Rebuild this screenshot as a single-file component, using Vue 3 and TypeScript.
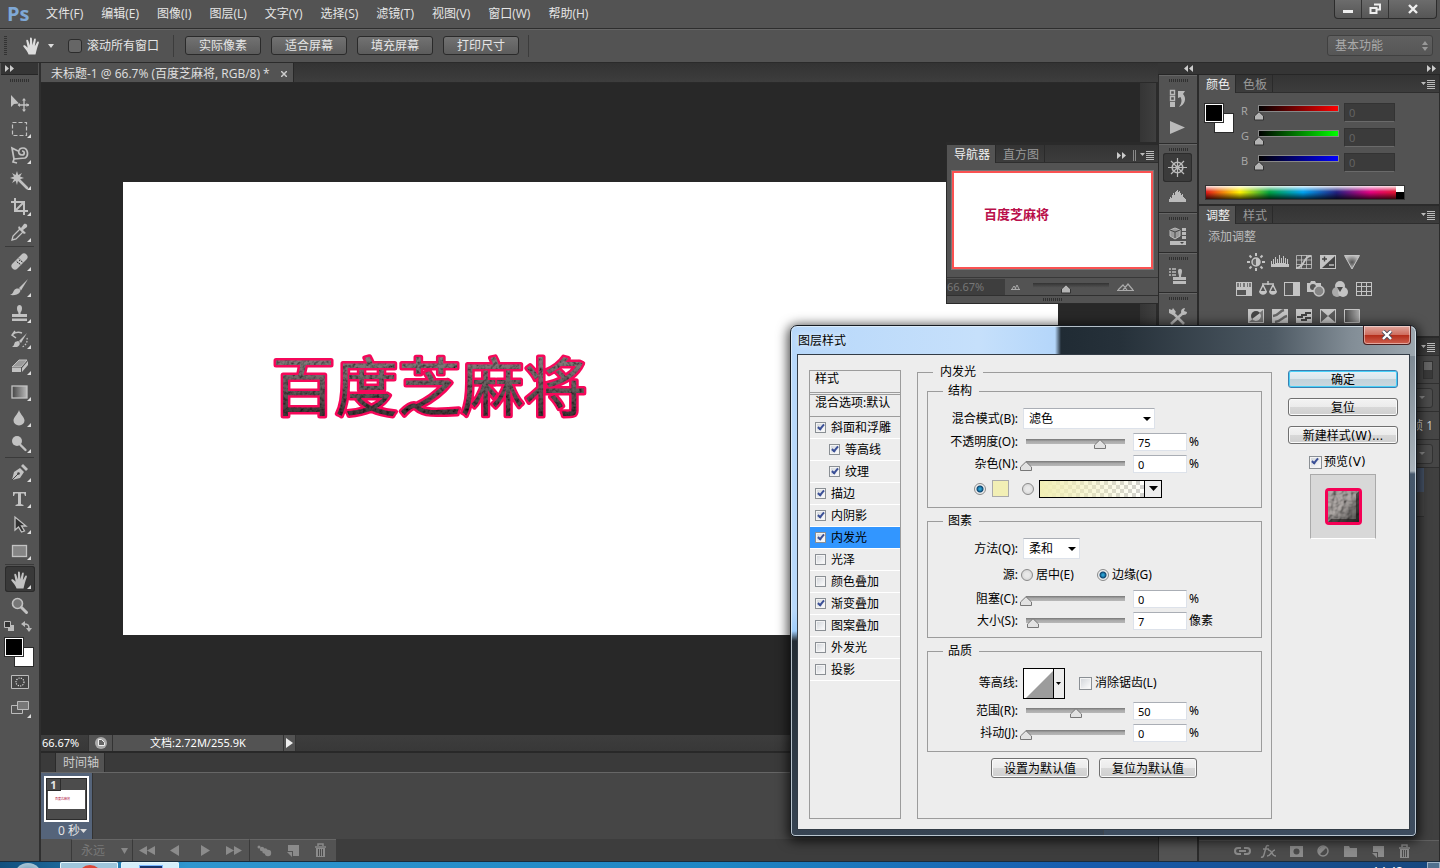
<script setup lang="ts">
import { reactive, ref } from 'vue'

const menus = ['文件(F)', '编辑(E)', '图像(I)', '图层(L)', '文字(Y)', '选择(S)', '滤镜(T)', '视图(V)', '窗口(W)', '帮助(H)']
const viewButtons = ['实际像素', '适合屏幕', '填充屏幕', '打印尺寸']
const handShape = '<path d="M6.6 18.5C5.4 15.6 3.4 13.2 1.4 10.6c-.7-1.1.8-2 1.8-1.1l2.500 2.300L4.300 5c-.2-1.400 1.500-1.700 1.900-.4l1.700 5L8 2.600c0-1.400 1.800-1.400 1.900 0l.5 6.700 1.600-6c.3-1.300 2-1 1.800.4l-1 6.500 2.400-4.100c.7-1.100 2.100-.3 1.600.9-1.600 4-2.200 7.600-3.300 11.500z" fill="currentColor"/>'

interface Tool { name: string; art: string; flyout?: boolean; active?: boolean }

const toolGroups: Tool[][] = [
  [
    { name: '移动工具', art: '<path d="M1 2v12l3-3 5-.5z" fill="currentColor"/><path d="M14 6.500v11M8.500 12h11" stroke="currentColor" stroke-width="1.300"/><path d="M14 5l2 2.500h-4zM14 19l2-2.500h-4zM7.500 12l2.500-2v4zM19 12l-2.500-2v4z" fill="currentColor"/>' },
    { name: '矩形选框工具', flyout: true, art: '<rect x="2.500" y="3.500" width="14" height="13" fill="none" stroke="currentColor" stroke-width="1.200" stroke-dasharray="4 2"/>' },
    { name: '套索工具', flyout: true, art: '<path d="M4 14L2 3l6 3M4 14l11-1c4-2 3-10-2-10-5 0-6 7-1 7 3 0 3-4 0-4M4 14l-1 3 4 1" fill="none" stroke="currentColor" stroke-width="1.700"/>' },
    { name: '魔棒工具', flyout: true, art: '<path d="M9 9l8 8" stroke="currentColor" stroke-width="2.600" stroke-linecap="round"/><path d="M7 0l1.200 4L12 2l-2 3.500 4 1.500-4 1.200L12 12 8 9.800 7 14 5.600 9.800 2 12l2-3.800L0 7l4-1.500L2 2l3.600 2z" fill="currentColor"/>' },
    { name: '裁剪工具', flyout: true, art: '<path d="M5 1v13h13M1 5h13v13M6 13l8-8" fill="none" stroke="currentColor" stroke-width="2"/>' },
    { name: '吸管工具', flyout: true, art: '<path d="M2 17l1-4 7-7 3 3-7 7z" fill="none" stroke="currentColor" stroke-width="1.300"/><path d="M9 3l7 7-2 1-6-6zM11 5l3-4c2-1 4 1 3 3l-4 3z" fill="currentColor"/>' },
  ],
  [
    { name: '修补工具', flyout: true, art: '<path d="M5 14l9-9" stroke="currentColor" stroke-width="7" stroke-linecap="round"/><path d="M6 8.500l5 5M8.500 6l5 5" stroke="#666" stroke-width=".8"/><path d="M9 8h1v1H9zM11 9h1v1h-1zM9 11h1v1H9zM7 10h1v1H7z" fill="#444"/>' },
    { name: '画笔工具', flyout: true, art: '<path d="M18 1L9 10l2 2.500z" fill="currentColor"/><path d="M8 10.500c2 0 3 2 2 3.500-2 3-6 3.500-10 3 3-1 3-3 4-4.500s2-2 4-2z" fill="currentColor"/>' },
    { name: '仿制图章工具', flyout: true, art: '<path d="M7 4c0-4 5-4 5 0s-1.500 3-1.500 6H17v3H2v-3h6.500C8.500 7 7 8 7 4zM2 14.500h15V17H2z" fill="currentColor"/>' },
    { name: '历史记录画笔工具', flyout: true, art: '<path d="M17 3l-8 8 2 2zM8 11c3 1 2 5-1 6H2c2-1 2-3 3-5z" fill="currentColor"/><path d="M2 5c3-3 7-3 10-2M5 1L2 5l4 3" fill="none" stroke="currentColor" stroke-width="1.500"/><path d="M17 8c1 4-2 8-5 9" fill="none" stroke="currentColor" stroke-width="1.300" stroke-dasharray="1.500 1.500"/>' },
    { name: '橡皮擦工具', flyout: true, art: '<path d="M2 11L9 4h8l-6 7z" fill="#9a9a9a" stroke="currentColor"/><path d="M2 12h9v4H2zM12 12l6-7v4l-6 7z" fill="currentColor"/>' },
    { name: '渐变工具', flyout: true, art: '<defs><linearGradient id="tg"><stop stop-color="#444"/><stop offset="1" stop-color="#bbb"/></linearGradient></defs><rect x="2" y="4" width="15" height="12" fill="url(#tg)" stroke="currentColor" stroke-width="1.300"/>' },
    { name: '模糊工具', flyout: true, art: '<path d="M9 2c1 4 5.500 7 5.500 10.500a5.500 5 0 0 1-11 0C3.500 9 8 6 9 2z" fill="currentColor"/>' },
    { name: '减淡工具', flyout: true, art: '<circle cx="7" cy="7" r="5" fill="currentColor"/><path d="M10.500 11l5 5" stroke="currentColor" stroke-width="2.400" stroke-linecap="round"/>' },
  ],
  [
    { name: '钢笔工具', flyout: true, art: '<path d="M2 17L4 9l6-4 4 4-4 6z" fill="currentColor"/><path d="M2 17l6-6" stroke="#444"/><circle cx="8.500" cy="10.500" r="1.300" fill="#444"/><path d="M11 3l2-2 5 5-2 2z" fill="currentColor"/>' },
    { name: '横排文字工具', flyout: true, art: '<path d="M3 3h13v4h-1l-1-2.500h-3V15l2.500 1v1h-8v-1L8 15V4.500H5L4 7H3z" fill="currentColor"/>' },
    { name: '路径选择工具', flyout: true, art: '<path d="M5 2v13l3.500-3 3 5 3-1-3-5h4.500z" fill="#303030" stroke="currentColor" stroke-width="1.300"/>' },
    { name: '矩形工具', flyout: true, art: '<rect x="2.500" y="4.500" width="14" height="11" fill="#858585" stroke="currentColor" stroke-width="1.300"/>' },
  ],
  [
    { name: '抓手工具', flyout: true, active: true, art: handShape },
    { name: '缩放工具', art: '<circle cx="7.500" cy="7.500" r="5" fill="#777" stroke="currentColor" stroke-width="1.600"/><path d="M11.500 11.500l5 5" stroke="currentColor" stroke-width="3" stroke-linecap="round"/>' },
  ],
]

const dockGroups: Tool[][] = [
  [
    { name: '历史记录', art: '<path d="M2.500 1.500h4v4h-4zM2.500 7.500h4v4h-4z" fill="none" stroke="currentColor" stroke-width="1.400"/><path d="M2 13h5v5H2z" fill="currentColor"/><path d="M10 2h7l-2 3c4 4 2 11-4 13 3-4 3-7 1.500-10L10 9z" fill="currentColor"/>' },
    { name: '动作', art: '<path d="M2 3v13l15-6.500z" fill="currentColor"/>' },
  ],
  [
    { name: '导航器', active: true, art: '<circle cx="9.500" cy="9.500" r="5.300" fill="none" stroke="currentColor" stroke-width="1.600"/><circle cx="9.500" cy="9.500" r="2" fill="currentColor"/><path d="M9.500 0v19M0 9.500h19M3 3l13 13M16 3L3 16" stroke="currentColor" stroke-width="1.200"/>' },
    { name: '直方图', art: '<path d="M1 15v-3h1v-2h1v1h1V8h1V6h1v2h1V5h1V4h1V3h1v2h1V4h1v2h1v2h1V7h1v3h1v1h1v1h1v3z" fill="currentColor"/>' },
  ],
  [{ name: '3D', art: '<path d="M2 3l5-2 5 2v6l-5 3-5-3z" fill="#9a9a9a" stroke="currentColor"/><path d="M2 3l5 2 5-2M7 5v6" fill="none" stroke="#444"/><path d="M14 1h4v3h-4zM14 5h4v3h-4zM14 9h4v3h-4zM2 14h16v4H2z" fill="currentColor"/><path d="M12 15h4l-2 2z" fill="#444"/>' }],
  [{ name: '仿制源', art: '<path d="M1 2h2M4 2h4M1 5h2M4 5h4M1 8h2M4 8h4" stroke="currentColor" stroke-width="1.500"/><path d="M10 4c0-3 4-3 4 0s-1 3-1 6h5v3H5v-3h6c0-3-1-3-1-6zM5 14h13v3H5z" fill="currentColor"/>' }],
  [{ name: '工具预设', art: '<path d="M3 17L15 6M4 5l12 12" stroke="currentColor" stroke-width="2.600"/><path d="M1 2l3 1 1-2 3 4-3 3-4-2z" fill="currentColor"/><path d="M13 5c0-3 2-4 4-4l-1 3 3 1c0 3-3 3-5 3z" fill="currentColor"/>' }],
]

const adjustmentRows: string[][] = [
  [
    '<circle cx="9" cy="9" r="4" fill="#666" stroke="currentColor" stroke-width="1.500"/><path d="M9 5a4 4 0 0 1 0 8zM8 0h2v3H8zM8 15h2v3H8zM0 8h3v2H0zM15 8h3v2h-3z" fill="currentColor"/><path d="M2.500 2.500l2 2M13.500 13.500l2 2M15.500 2.500l-2 2M4.500 13.500l-2 2" stroke="currentColor" stroke-width="2"/>',
    '<path d="M0 14V8h1v3h1V6h1v5h1V4h1v6h1V6h1v4h1V2h1v8h1V5h1v5h1V3h1v7h1V5h1v6h1V6h1v5h1v3z" fill="currentColor"/>',
    '<path d="M1.500 2.500h15v13h-15zM6.500 2v14M11.500 2v14M1 7h16M1 11.500h16" fill="none" stroke="currentColor" stroke-width=".8"/><path d="M1 15c9 0 7-12 15-12" fill="none" stroke="currentColor" stroke-width="1.800"/>',
    '<path d="M1 2h16v14H1z" fill="currentColor"/><path d="M3 15L16 3v12z" fill="#444"/><path d="M3 6h5M5.500 3.500v5" stroke="#444" stroke-width="1.400"/><path d="M10 12h5" stroke="currentColor" stroke-width="1.400"/>',
    '<defs><radialGradient id="vg"><stop stop-color="#555"/><stop offset="1" stop-color="#bbb"/></radialGradient></defs><path d="M1.500 2.500h15L9 16z" fill="url(#vg)" stroke="currentColor"/>',
  ],
  [
    '<path d="M1 2h16v14H1z" fill="currentColor"/><path d="M2 3h2v4H2zM5 3h1v4H5zM8 3h2v4H8zM12 3h1v4h-1zM14 3h2v4h-2z" fill="#777"/><path d="M2 10h9v5H2z" fill="#555"/>',
    '<path d="M9 1v4M3 4h12M4 5l-3 6M4 5l3 6M14 5l-3 6M14 5l3 6" fill="none" stroke="currentColor" stroke-width="1.500"/><path d="M0 11h8c0 5-8 5-8 0zM10 11h8c0 5-8 5-8 0z" fill="currentColor"/>',
    '<path d="M1 2h16v14H1z" fill="currentColor"/><path d="M2 3h8v12H2z" fill="#555"/>',
    '<path d="M0 3h3l1-2h4l1 2h5v9H0z" fill="currentColor"/><circle cx="6" cy="7" r="3" fill="#555"/><circle cx="12" cy="11" r="5" fill="#858585" stroke="currentColor" stroke-width="1.500"/>',
    '<circle cx="9" cy="6" r="5" fill="currentColor"/><circle cx="6" cy="12" r="5" fill="#aaa"/><circle cx="12" cy="12" r="5" fill="currentColor"/><path d="M6 7l6 0-3 5z" fill="#484848"/>',
    '<path d="M1 2h16v14H1z" fill="currentColor"/><path d="M2 3h4v3H2zM7 3h4v3H7zM12 3h4v3h-4zM2 7h4v4H2zM7 7h4v4H7zM12 7h4v4h-4zM2 12h4v3H2zM7 12h4v3H7zM12 12h4v3h-4z" fill="#535353"/>',
  ],
  [
    '<path d="M1 2h16v14H1z" fill="currentColor"/><path d="M2 15L16 3v12z" fill="#777"/><circle cx="9" cy="9" r="5" fill="#454545"/><path d="M5 12a5 5 0 0 0 8-6z" fill="currentColor"/>',
    '<path d="M1 2h16v14H1z" fill="currentColor"/><path d="M2 9c7-1 6-5 11-6M4 15c7-1 7-5 12-6" fill="none" stroke="#666" stroke-width="2.500"/>',
    '<path d="M1 2h16v14H1z" fill="currentColor"/><path d="M2 9h4V7h4V5h6v2h-4v2H8v2H2zM6 14v-2h4v-2h6v2h-4v2z" fill="#444"/>',
    '<path d="M1 2h16v14H1z" fill="currentColor"/><path d="M2 3v12l7-6zM16 3v12l-7-6z" fill="#5a5a5a"/>',
    '<defs><linearGradient id="ag"><stop stop-color="#484848"/><stop offset="1" stop-color="#aaa"/></linearGradient></defs><path d="M1.500 2.500h15v13h-15z" fill="url(#ag)" stroke="currentColor"/>',
  ],
]

const layerActions: Tool[] = [
  { name: '链接图层', art: '<path d="M8 6H5a3 3 0 0 0 0 6h3M11 6h3a3 3 0 0 1 0 6h-3M6 9h7" fill="none" stroke="currentColor" stroke-width="2"/>' },
  { name: '图层样式', art: '<path d="M9 4c-3-2-3 2-4 5s-1 7-4 6M3 7h6M8 8c4-1 3 6 8 6M15 8c-3 0-4 6-8 6" fill="none" stroke="currentColor" stroke-width="1.500"/>' },
  { name: '添加蒙版', art: '<path d="M3 4h13v11H3z" fill="currentColor"/><circle cx="9.500" cy="9.500" r="3" fill="#4b4b4b"/>' },
  { name: '新建调整图层', art: '<circle cx="9" cy="9" r="5" fill="none" stroke="currentColor" stroke-width="1.500"/><path d="M5.500 12.500a5 5 0 0 1 7-7z" fill="currentColor"/>' },
  { name: '新建组', art: '<path d="M3 4h5l1 2h7v9H3z" fill="currentColor"/>' },
  { name: '新建图层', art: '<path d="M5 4h11v11h-6v-5H5z" fill="currentColor"/><path d="M4 11h5v5z" fill="currentColor"/>' },
  { name: '删除图层', art: '<path d="M4 6h11M7 5V3h5v2" fill="none" stroke="currentColor" stroke-width="1.500"/><path d="M5 7h9v9H5z" fill="currentColor"/><path d="M7.500 8v7M9.500 8v7M11.500 8v7" stroke="#4b4b4b"/>' },
]
const playback: Tool[] = [
  { name: '第一帧', art: '<path d="M9 5v9l-8-4.500zM17 5v9l-8-4.500z" fill="currentColor"/>' },
  { name: '上一帧', art: '<path d="M12 4v11L3 9.500z" fill="currentColor"/>' },
  { name: '播放', art: '<path d="M5 4v11l9-5.500z" fill="currentColor"/>' },
  { name: '下一帧', art: '<path d="M1 5v9l8-4.500zM9 5v9l8-4.500z" fill="currentColor"/>' },
]
const frameActions: Tool[] = [
  { name: '过渡动画帧', art: '<circle cx="4" cy="6" r="1.500" fill="currentColor"/><circle cx="7" cy="8" r="2.200" fill="currentColor"/><circle cx="10" cy="10" r="2.700" fill="currentColor"/><circle cx="13" cy="12" r="3.200" fill="currentColor"/>' },
  layerActions[5],
  layerActions[6],
]

const channels = reactive([
  { name: 'R', css: 'red', value: 0 },
  { name: 'G', css: 'green', value: 0 },
  { name: 'B', css: 'blue', value: 0 },
])

const effects = reactive([
  { name: '斜面和浮雕', on: true, sub: false },
  { name: '等高线', on: true, sub: true },
  { name: '纹理', on: true, sub: true },
  { name: '描边', on: true, sub: false },
  { name: '内阴影', on: true, sub: false },
  { name: '内发光', on: true, sub: false },
  { name: '光泽', on: false, sub: false },
  { name: '颜色叠加', on: false, sub: false },
  { name: '渐变叠加', on: true, sub: false },
  { name: '图案叠加', on: false, sub: false },
  { name: '外发光', on: false, sub: false },
  { name: '投影', on: false, sub: false },
])
const selected = ref('内发光')

interface Amount { id: string; label: string; value: number; unit: string }
const structure = reactive<Amount[]>([
  { id: 'opacity', label: '不透明度(O):', value: 75, unit: '%' },
  { id: 'noise', label: '杂色(N):', value: 0, unit: '%' },
])
const elements = reactive<Amount[]>([
  { id: 'choke', label: '阻塞(C):', value: 0, unit: '%' },
  { id: 'size', label: '大小(S):', value: 7, unit: '像素' },
])
const quality = reactive<Amount[]>([
  { id: 'range', label: '范围(R):', value: 50, unit: '%' },
  { id: 'jitter', label: '抖动(J):', value: 0, unit: '%' },
])
const fill = ref('color')
const source = ref('edge')
const preview = ref(true)
const antialias = ref(false)
const scrollAll = ref(false)
const zoom = ref(44)
</script>

<template>
  <div class="app">
    <header class="menubar">
      <span class="logo">Ps</span>
      <nav class="menus"><button v-for="m in menus" :key="m" type="button">{{ m }}</button></nav>
      <div class="winbtns">
        <button type="button" aria-label="最小化"><svg width="12" height="12"><path d="M1 7h10v3H1z" fill="#eee" /></svg></button>
        <button type="button" aria-label="还原"><svg width="12" height="12"><path d="M5 1.500h6v5H8M1.500 5h6v5h-6z" fill="none" stroke="#eee" stroke-width="2" /></svg></button>
        <button type="button" class="wide" aria-label="关闭"><svg width="12" height="12"><path d="M2 2l8 8M10 2l-8 8" stroke="#eee" stroke-width="2.400" /></svg></button>
      </div>
    </header>

    <div class="options">
      <i class="vgrip"></i>
      <svg class="hand" width="18" height="19" viewBox="0 0 18 19" v-html="handShape"></svg>
      <svg class="drop" width="6" height="4"><path d="M0 0h6L3 4z" fill="#ddd" /></svg>
      <label class="scroll-all"><input v-model="scrollAll" type="checkbox">滚动所有窗口</label>
      <div class="viewbtns"><button v-for="b in viewButtons" :key="b" type="button">{{ b }}</button></div>
      <div class="workspace-pick">
        <select aria-label="工作区"><option>基本功能</option></select>
        <svg width="6" height="10"><path d="M0 4h6L3 0zM0 6h6l-3 4z" fill="#999" /></svg>
      </div>
    </div>

    <div class="work">
      <aside class="tools">
        <div class="dockhead"><svg width="9" height="7"><path d="M0 0v7l4-3.500zM5 0v7l4-3.500z" fill="#ccc" /></svg></div>
        <i class="hgrip"></i>
        <div v-for="(g, gi) in toolGroups" :key="gi" class="toolgroup">
          <button v-for="t in g" :key="t.name" type="button" :aria-label="t.name" :class="{ active: t.active, flyout: t.flyout }">
            <svg width="19" height="19" viewBox="0 0 19 19" v-html="t.art"></svg>
          </button>
        </div>
        <div class="mini">
          <svg width="10" height="10"><path d="M4 4h6v6H4z" fill="#bbb" /><path d="M.5.500h6v6h-6z" fill="#333" stroke="#bbb" /></svg>
          <svg width="11" height="11"><path d="M3 3c4 0 5 1 5 5" fill="none" stroke="#bbb" stroke-width="1.500" /><path d="M0 3l4-3v6zM5 7h6l-3 4z" fill="#bbb" /></svg>
        </div>
        <div class="swatches"><i class="bg"></i><i class="fg"></i></div>
        <button class="modebtn" type="button" aria-label="快速蒙版"><svg width="18" height="14"><path d="M.5.500h17v13H.5z" fill="#444" stroke="#bbb" /><circle cx="9" cy="7" r="4" fill="none" stroke="#ddd" stroke-width="1.200" stroke-dasharray="1.200 1.200" /></svg></button>
        <button class="modebtn flyout" type="button" aria-label="屏幕模式"><svg width="18" height="14"><path d="M.5 4.500h11v8H.5z" fill="#555" stroke="#bbb" /><path d="M6.500.500h11v8h-11z" fill="#777" stroke="#bbb" /></svg></button>
      </aside>

      <main class="center">
        <div class="tabbar">
          <div class="doctab"><span>未标题-1 @ 66.7% (百度芝麻将, RGB/8) *</span><button type="button" aria-label="关闭文档"><svg width="6" height="6"><path d="M0 0l6 6M6 0L0 6" stroke="#ccc" stroke-width="1.500" /></svg></button></div>
        </div>
        <div class="docarea">
          <div class="stage">
            <svg class="canvas" viewBox="0 0 935 453">
              <defs>
                <linearGradient id="metal" x1="0" y1="0" x2="0" y2="1"><stop offset=".1" stop-color="#918a8a" /><stop offset=".6" stop-color="#5f5958" /><stop offset="1" stop-color="#2a2323" /></linearGradient>
                <filter id="rock" x="-5%" y="-10%" width="110%" height="120%">
                  <feTurbulence type="fractalNoise" baseFrequency=".3" numOctaves="2" result="n" />
                  <feColorMatrix in="n" values="0 0 0 0 0  0 0 0 0 0  0 0 0 0 0  2 0 0 0 -.8" result="d" />
                  <feComposite in="d" in2="SourceAlpha" operator="in" result="t" />
                  <feMerge><feMergeNode in="SourceGraphic" /><feMergeNode in="t" /></feMerge>
                </filter>
              </defs>
              <text class="art outline" x="149" y="228">百度芝麻将</text>
              <text class="art" x="149" y="228" fill="url(#metal)" filter="url(#rock)">百度芝麻将</text>
            </svg>
          </div>
          <div class="scrollbar"></div>
        </div>
        <div class="status">
          <span class="pct">66.67%</span>
          <span class="sicon"><svg width="12" height="12"><circle cx="6" cy="6" r="6" fill="#aaa" /><path d="M3.500 2.500h3l3 3v3h-6z" fill="#666" stroke="#eee" /></svg></span>
          <span class="docsize">文档:2.72M/255.9K</span>
          <button type="button" aria-label="状态选项"><svg width="7" height="10"><path d="M0 0v10l7-5z" fill="#eee" /></svg></button>
        </div>
        <section class="timeline">
          <div class="ttabs"><span>时间轴</span></div>
          <div class="frames">
            <div class="frame">
              <div class="fthumb"><b>1</b><div class="fpaper"><span>百度芝麻将</span></div></div>
              <div class="delay">0 秒<svg width="7" height="4"><path d="M0 0h7L3.500 4z" fill="#ddd" /></svg></div>
            </div>
          </div>
          <div class="tcontrols">
            <div class="loop">永远<svg width="7" height="6"><path d="M0 0h7L3.500 6z" fill="#888" /></svg></div>
            <div class="cgroup play"><button v-for="p in playback" :key="p.name" type="button" :aria-label="p.name"><svg width="19" height="19" viewBox="0 0 19 19" v-html="p.art"></svg></button></div>
            <div class="cgroup"><button v-for="p in frameActions" :key="p.name" type="button" :aria-label="p.name"><svg width="19" height="19" viewBox="0 0 19 19" v-html="p.art"></svg></button></div>
          </div>
        </section>
      </main>

      <div class="right">
        <div class="dockhead wide"><svg width="9" height="7"><path d="M4 0v7L0 3.500zM9 0v7L5 3.500z" fill="#ccc" /></svg><svg width="9" height="7"><path d="M0 0v7l4-3.500zM5 0v7l4-3.500z" fill="#ccc" /></svg></div>
        <div class="rightcols">
          <div class="dock">
            <div v-for="(g, gi) in dockGroups" :key="gi" class="dockgroup">
              <i class="hgrip"></i>
              <button v-for="t in g" :key="t.name" type="button" :aria-label="t.name" :class="{ active: t.active }"><svg width="19" height="19" viewBox="0 0 19 19" v-html="t.art"></svg></button>
            </div>
          </div>
          <div class="panels">
            <section class="panel color">
              <div class="ptabs"><span class="on">颜色</span><span>色板</span><svg class="pmenu" width="14" height="9"><path d="M0 2h5L2.500 5zM6 0h8v1H6zM6 2h8v1H6zM6 4h8v1H6zM6 6h8v1H6zM6 8h8v1H6z" fill="#bbb" /></svg></div>
              <div class="cbody">
                <div class="swatches"><i class="bg"></i><i class="fg"></i></div>
                <div class="channels">
                  <div v-for="c in channels" :key="c.name" class="channel">
                    <label :for="'c' + c.name">{{ c.name }}</label>
                    <input :id="'c' + c.name" v-model.number="c.value" type="range" max="255" :class="c.css">
                    <input v-model="c.value" type="text" :aria-label="c.name + ' 值'">
                  </div>
                </div>
              </div>
              <div class="spectrum"><i></i></div>
            </section>
            <section class="panel adjust">
              <div class="ptabs"><span class="on">调整</span><span>样式</span><svg class="pmenu" width="14" height="9"><path d="M0 2h5L2.500 5zM6 0h8v1H6zM6 2h8v1H6zM6 4h8v1H6zM6 6h8v1H6zM6 8h8v1H6z" fill="#bbb" /></svg></div>
              <p>添加调整</p>
              <div v-for="(r, ri) in adjustmentRows" :key="ri" class="adjrow"><svg v-for="(a, ai) in r" :key="ai" width="18" height="18" v-html="a"></svg></div>
            </section>
            <section class="panel layers">
              <div class="ptabs"><svg class="pmenu" width="14" height="9"><path d="M0 2h5L2.500 5zM6 0h8v1H6zM6 2h8v1H6zM6 4h8v1H6zM6 6h8v1H6zM6 8h8v1H6z" fill="#bbb" /></svg></div>
              <div class="lrow"><i class="switch"></i></div>
              <div class="lrow"><i class="dropbtn"></i></div>
              <div class="lrow">传播帧 1</div>
              <div class="lrow"><i class="dropbtn"></i></div>
              <div class="llist"><div class="lsel"></div><div class="litem"></div></div>
              <div class="lactions"><button v-for="a in layerActions" :key="a.name" type="button" :aria-label="a.name"><svg width="19" height="19" viewBox="0 0 19 19" v-html="a.art"></svg></button></div>
            </section>
          </div>
        </div>
      </div>
    </div>

    <footer class="taskbar"><i class="orb"></i><i class="task"><b class="round"></b></i><i class="task lit"><b></b></i><time>14:43</time><i class="peek"></i></footer>

    <section class="navigator">
      <div class="ptabs"><span class="on">导航器</span><span>直方图</span><svg class="pmenu" width="37" height="11"><path d="M0 2v7l4-3.500zM5 2v7l4-3.500z" fill="#ccc" /><path d="M16.500 0v11M18.500 0v11" stroke="#888" /><path d="M23 3h5l-2.500 3zM29 1h8v1h-8zM29 3h8v1h-8zM29 5h8v1h-8zM29 7h8v1h-8zM29 9h8v1h-8z" fill="#bbb" /></svg></div>
      <div class="nthumb"><span>百度芝麻将</span></div>
      <div class="nbar">
        <span>66.67%</span>
        <svg width="9" height="6"><path d="M0 5.500h9M1 5l2-3 2 3M4 5l2-4 2 4" fill="none" stroke="#aaa" /></svg>
        <input v-model.number="zoom" type="range" aria-label="缩放">
        <svg width="17" height="8"><path d="M0 7.500h17M1 7l5-5 4 5M6 7l5-6 5 6" fill="none" stroke="#aaa" stroke-width="1.200" /></svg>
      </div>
      <i class="hgrip"></i>
    </section>

    <section class="dialog" role="dialog" aria-label="图层样式">
      <div class="dtitle"><h1>图层样式</h1><button type="button" aria-label="关闭"><svg width="12" height="10"><path d="M2 1l8 8M10 1L2 9" stroke="#4a4a5a" stroke-width="4" /><path d="M2 1l8 8M10 1L2 9" stroke="#fff" stroke-width="2.400" /></svg></button></div>
      <div class="client">
        <div class="styles">
          <div class="shead">样式</div>
          <div class="shead second">混合选项:默认</div>
          <div v-for="e in effects" :key="e.name" class="effect" :class="{ sub: e.sub, sel: e.name === selected }" @click="selected = e.name">
            <label><input v-model="e.on" type="checkbox">{{ e.name }}</label>
          </div>
        </div>

        <fieldset class="outer">
          <legend>内发光</legend>
          <fieldset class="group">
            <legend>结构</legend>
            <div class="row tall"><label for="blend">混合模式(B):</label><div class="pick wide"><select id="blend"><option>滤色</option></select></div></div>
            <div v-for="a in structure" :key="a.id" class="row">
              <label :for="a.id">{{ a.label }}</label><input v-model.number="a.value" type="range" :aria-label="a.label"><input :id="a.id" v-model="a.value" type="text"><span>{{ a.unit }}</span>
            </div>
            <div class="fills">
              <input v-model="fill" type="radio" value="color" aria-label="纯色"><button type="button" class="chip" aria-label="发光颜色"></button>
              <input v-model="fill" type="radio" value="gradient" aria-label="渐变"><button type="button" class="grad" aria-label="编辑渐变"><i></i><svg width="9" height="5"><path d="M0 0h9L4.500 5z" /></svg></button>
            </div>
          </fieldset>
          <fieldset class="group">
            <legend>图素</legend>
            <div class="row medium"><label for="method">方法(Q):</label><div class="pick"><select id="method"><option>柔和</option></select></div></div>
            <div class="row radios">
              <span class="cap">源:</span>
              <label><input v-model="source" type="radio" value="center">居中(E)</label>
              <label><input v-model="source" type="radio" value="edge">边缘(G)</label>
            </div>
            <div v-for="a in elements" :key="a.id" class="row">
              <label :for="a.id">{{ a.label }}</label><input v-model.number="a.value" type="range" :aria-label="a.label"><input :id="a.id" v-model="a.value" type="text"><span>{{ a.unit }}</span>
            </div>
          </fieldset>
          <fieldset class="group last">
            <legend>品质</legend>
            <div class="row contour">
              <span class="cap">等高线:</span>
              <button type="button" aria-label="等高线"><svg width="30" height="29"><path d="M0 0h30v29H0z" fill="#fff" /><path d="M2 29L30 1v28z" fill="#9c9c9c" /></svg><svg width="5" height="3"><path d="M0 0h5L2.500 3z" /></svg></button>
              <label><input v-model="antialias" type="checkbox">消除锯齿(L)</label>
            </div>
            <div v-for="a in quality" :key="a.id" class="row">
              <label :for="a.id">{{ a.label }}</label><input v-model.number="a.value" type="range" :aria-label="a.label"><input :id="a.id" v-model="a.value" type="text"><span>{{ a.unit }}</span>
            </div>
          </fieldset>
          <div class="defaults"><button type="button" class="btn">设置为默认值</button><button type="button" class="btn">复位为默认值</button></div>
        </fieldset>

        <div class="actions">
          <button type="button" class="btn primary">确定</button>
          <button type="button" class="btn">复位</button>
          <button type="button" class="btn">新建样式(W)...</button>
          <label><input v-model="preview" type="checkbox">预览(V)</label>
          <div class="sample">
            <svg width="37" height="37">
              <defs>
                <filter id="bump" x="0" y="0" width="100%" height="100%"><feTurbulence type="fractalNoise" baseFrequency=".2" numOctaves="2" /><feDiffuseLighting lighting-color="#b4aeab" surfaceScale="2"><feDistantLight azimuth="225" elevation="48" /></feDiffuseLighting></filter>
                <linearGradient id="shade" x1="0" y1="0" x2="1" y2="1"><stop offset=".45" stop-color="#000" stop-opacity="0" /><stop offset="1" stop-color="#000" stop-opacity=".6" /></linearGradient>
              </defs>
              <rect width="37" height="37" rx="4" fill="#f50055" />
              <rect x="3" y="3" width="31" height="31" filter="url(#bump)" />
              <rect x="3" y="3" width="31" height="31" fill="url(#shade)" />
              <path d="M3 34l3-3h25V6l3-3v31z" fill="#151010" opacity=".6" />
            </svg>
          </div>
        </div>
      </div>
    </section>
  </div>
</template>

<style>
body { margin: 0; background: #535353; overflow: hidden; }
</style>

<style scoped>
.app { position: relative; display: flex; flex-direction: column; height: 100vh; overflow: hidden; background: #535353; color: #e6e6e6; font: 12px/16px "Open Sans", "Noto Sans CJK SC", sans-serif;
  --thumb: url("data:image/svg+xml,%3Csvg xmlns='http://www.w3.org/2000/svg' width='12' height='10'%3E%3Cpath d='M6 .7L11.500 6v3.500H.5V6z' fill='%23e2e2e2' stroke='%23777'/%3E%3C/svg%3E");
  --darkthumb: url("data:image/svg+xml,%3Csvg xmlns='http://www.w3.org/2000/svg' width='12' height='10'%3E%3Cpath d='M6 .7L10.500 5v4h-9V5z' fill='%23b4b4b4' stroke='%23333'/%3E%3C/svg%3E"); }
.app *, .app *::before, .app *::after { box-sizing: border-box; }
.app svg { flex: none; display: block; }
button { font: inherit; color: inherit; padding: 0; margin: 0; border: 0; background: none; display: flex; align-items: center; justify-content: center; }
input, select { font: inherit; margin: 0; }
i { display: block; flex: none; }

.menubar { flex: none; height: 28px; display: flex; align-items: center; padding-left: 7px; }
.logo { width: 39px; color: #7fa8d6; font: bold 20px/26px "Open Sans", sans-serif; }
.menus { display: flex; gap: 18px; flex: 1; }
.winbtns { display: flex; align-self: flex-start; height: 19px; margin-right: 3px; border: 1px solid #2c2c2c; border-top: 0; border-radius: 0 0 4px 4px; background: linear-gradient(#6c6c6c, #565656); }
.winbtns button { width: 27px; border-right: 1px solid #333; }
.winbtns .wide { width: 47px; border: 0; }

.options { flex: none; height: 34px; display: flex; align-items: center; border-top: 1px solid #2e2e2e; box-shadow: inset 0 1px #666; padding: 0 7px 0 4px; }
.vgrip { width: 3px; height: 19px; background: repeating-linear-gradient(#333 0 1px, transparent 1px 2px); }
.hand { margin-left: 15px; color: #ddd; }
.drop { margin-left: 8px; }
.scroll-all { display: flex; align-items: center; height: 22px; gap: 5px; margin-left: 4px; padding: 0 14px 0 10px; border-right: 1px solid #3c3c3c; }
.scroll-all input { appearance: none; width: 14px; height: 14px; border: 1px solid #2c2c2c; border-radius: 3px; background: #666; }
.viewbtns { display: flex; gap: 10px; padding: 0 9px 0 11px; height: 22px; align-items: center; border-right: 1px solid #3c3c3c; }
.viewbtns button { width: 76px; height: 19px; border: 1px solid #2a2a2a; border-radius: 3px; background: linear-gradient(#727272, #5c5c5c); }
.workspace-pick { position: relative; margin-left: auto; }
.workspace-pick select { appearance: none; display: block; width: 106px; height: 21px; padding: 0 7px; color: #aaa; background: linear-gradient(#606060, #565656); border: 1px solid #404040; border-radius: 3px; }
.workspace-pick svg { position: absolute; right: 5px; top: 6px; }

.work { flex: 1; min-height: 0; display: flex; border-top: 1px solid #2b2b2b; }
.tools { flex: none; width: 41px; padding: 0 1px; border-right: 2px solid #2f2f2f; }
.dockhead { height: 12px; display: flex; align-items: center; padding-left: 4px; background: #353535; border-bottom: 1px solid #262626; }
.hgrip { width: 19px; height: 3px; background: repeating-linear-gradient(90deg, #303030 0 1px, transparent 1px 2px); }
.tools > .hgrip { margin: 4px auto 7px; }
.toolgroup { margin: 0 4px; }
.toolgroup + .toolgroup { border-top: 1px solid #3a3a3a; margin-top: 1px; padding-top: 1px; }
.toolgroup button, .modebtn { position: relative; width: 30px; height: 26px; color: #c2c2c2; padding-right: 1px; }
.flyout::after { content: ""; position: absolute; right: 4px; bottom: 3px; border: 2px solid transparent; border-right-color: #ddd; border-bottom-color: #ddd; }
.toolgroup .active { background: #393939; border-radius: 3px; box-shadow: inset 0 0 0 1px #2b2b2b; }
.modebtn { margin: 0 4px; }
.mini { display: flex; justify-content: space-between; padding: 3px 6px 5px 3px; }
.swatches { position: relative; width: 30px; height: 30px; margin: 0 0 2px 3px; }
.swatches i { position: absolute; width: 20px; height: 20px; border: 1px solid #2b2b2b; }
.swatches .fg { left: 0; top: 0; background: #000; box-shadow: inset 0 0 0 1px #fff; }
.swatches .bg { right: 0; bottom: 0; background: #fff; }

.center { flex: 1; min-width: 0; display: flex; flex-direction: column; }
.tabbar { flex: none; height: 20px; display: flex; background: linear-gradient(#333, #3d3d3d); border-bottom: 1px solid #2a2a2a; }
.doctab { display: flex; align-items: center; gap: 11px; padding: 2px 6px 0 10px; background: #535353; border-right: 1px solid #282828; color: #e0e0e0; }
.docarea { flex: 1; min-height: 0; display: flex; background: #282828; }
.stage { flex: 1; min-width: 0; display: flex; align-items: center; justify-content: center; overflow: hidden; padding-bottom: 2px; }
.canvas { width: 935px; height: 453px; background: #fff; }
.art { font: 400 63px "Noto Sans CJK SC", sans-serif; }
.outline { fill: #f5085a; stroke: #f5085a; stroke-width: 5px; stroke-linejoin: round; }
.scrollbar { width: 18px; background: linear-gradient(90deg, #353535, #3f3f3f); border-right: 2px solid #2b2b2b; }
.status { flex: none; height: 17px; display: flex; background: linear-gradient(#3d3d3d, #383838); font: 11px/16px "Noto Sans", "Noto Sans CJK SC", sans-serif; color: #fff; border-bottom: 1px solid #282828; }
.status > * { border-right: 1px solid #333; }
.pct { width: 48px; padding-left: 1px; }
.sicon { width: 24px; display: flex; align-items: center; justify-content: center; background: #535353; }
.docsize { width: 171px; background: #535353; text-align: center; }
.status button { width: 12px; background: #535353; }
.timeline { flex: none; border-top: 1px solid #282828; }
.ttabs { height: 20px; padding-left: 14px; display: flex; background: #3a3a3a; border-bottom: 1px solid #666; }
.ttabs span { padding: 2px 5px 0 7px; background: #535353; border: solid #2b2b2b; border-width: 0 1px; color: #ccc; }
.frames { height: 66px; background: #464646; }
.frame { width: 52px; height: 66px; padding: 3px; background: #55647a; border-right: 1px solid #333; }
.fthumb { position: relative; height: 46px; width: 45px; border: 2px solid #fff; padding: 12px 2px; background: #4c4c4c; box-shadow: inset 0 0 0 1px #2c2c2c; }
.fthumb b { position: absolute; left: 1px; top: 1px; width: 14px; height: 12px; background: #4b4b4b; font-size: 11px; line-height: 12px; text-align: center; border: solid #2c2c2c; border-width: 0 1px 1px 0; }
.fpaper { height: 19px; background: #fff; padding: 7px 0 0 7px; }
.fpaper span { display: block; font-size: 3px; line-height: 4px; color: #b01040; }
.delay { display: flex; align-items: center; justify-content: flex-end; font-size: 12px; height: 17px; padding-right: 2px; }
.tcontrols { height: 22px; display: flex; padding-left: 30px; background: linear-gradient(90deg, #535353 30px, #3d3d3d 30px); color: #8b8b8b; }
.tcontrols > * { background: #535353; border-left: 1px solid #3a3a3a; border-top: 1px solid #666; }
.loop { width: 61px; display: flex; align-items: center; justify-content: space-between; padding: 0 4px 0 9px; color: #777; }
.cgroup { display: flex; padding-right: 2px; }
.cgroup button { width: 28px; }
.cgroup.play { padding: 0; }
.cgroup.play button { width: 29px; }

.right { flex: none; width: 282px; display: flex; flex-direction: column; }
.dockhead.wide { flex: none; justify-content: space-between; padding: 0 4px 0 26px; }
.rightcols { flex: 1; min-height: 0; display: flex; }
.dock { width: 41px; border: solid #2b2b2b; border-width: 0 2px 0 1px; }
.dockgroup { padding-bottom: 1px; border-top: 1px solid #666; border-bottom: 1px solid #2b2b2b; }
.dockgroup .hgrip { margin: 3px auto 2px; }
.dockgroup button { width: 29px; height: 29px; margin-left: 4px; color: #bbb; }
.dockgroup .active { background: #3b3b3b; border-radius: 3px; box-shadow: inset 0 0 0 1px #2c2c2c; }
.panels { flex: 1; display: flex; flex-direction: column; border-right: 1px solid #2b2b2b; }
.panel { flex: none; border-bottom: 2px solid #2b2b2b; }
.ptabs { position: relative; display: flex; height: 18px; background: linear-gradient(#343434, #3c3c3c); border-bottom: 1px solid #2e2e2e; color: #999; line-height: 19px; }
.ptabs span { padding: 0 5px 0 7px; border-right: 1px solid #2a2a2a; }
.ptabs .on { height: 18px; color: #f0f0f0; background: #535353; }
.pmenu { margin: 5px 4px 0 auto; }
.color { height: 131px; }
.cbody { display: flex; padding: 10px 0 0 5px; }
.cbody .swatches { margin: 0; }
.channels { padding-left: 7px; }
.channel { display: flex; align-items: flex-start; height: 25px; }
.channel label { width: 12px; color: #aaa; font-size: 11px; line-height: 16px; }
.channel input[type=text] { width: 51px; height: 19px; padding: 0 4px; border: 1px solid #333; border-bottom-color: #6a6a6a; background: #3b3b3b; color: #666; font-size: 11px; }
input[type=range] { appearance: none; width: 111px; height: 17px; background: linear-gradient(#777, #aaa 50%, #b8b8b8) 6px 5px / calc(100% - 12px) 5px no-repeat; }
input[type=range]::-webkit-slider-thumb { appearance: none; width: 12px; height: 10px; margin-top: 4px; background: var(--thumb) center / 12px 10px no-repeat; }
.channel input[type=range] { width: 91px; height: 19px; background: linear-gradient(90deg, #000, var(--c)) 6px 3px / calc(100% - 12px) 5px no-repeat, linear-gradient(#888, #888) 5px 2px / calc(100% - 10px) 7px no-repeat; }
.channel .red { --c: #f00; }
.channel .green { --c: #0f0; }
.channel .blue { --c: #00f; }
.channel input[type=range]::-webkit-slider-thumb { margin-top: 7px; background-image: var(--darkthumb); }
.spectrum { width: 200px; height: 15px; margin: 7px 0 0 6px; border: 1px solid #333; background: linear-gradient(rgba(255,255,255,.9), rgba(255,255,255,0) 45%, rgba(0,0,0,0) 50%, rgba(0,0,0,.75)), linear-gradient(90deg, #e01818, #fff000 17%, #00a040 32%, #00a0ee 49%, #23207e 66%, #e0007e 83%, #e01818); }
.spectrum i { width: 8px; height: 13px; margin-left: auto; background: linear-gradient(#fff 50%, #000 50%); }
.adjust { height: 132px; }
.adjust p { margin: 5px 0 8px 9px; color: #bbb; }
.adjrow { display: flex; justify-content: center; gap: 6px; height: 27px; padding-right: 30px; color: #c4c4c4; }
.layers { flex: 1; display: flex; flex-direction: column; min-height: 0; border-bottom: 0; background: #404040; }
.layers .ptabs { flex: none; }
.lrow { flex: none; height: 28px; padding: 0 6px; display: flex; align-items: center; justify-content: flex-end; background: #464646; border-bottom: 1px solid #303030; color: #ccc; }
.switch { width: 10px; height: 18px; background: linear-gradient(#666 50%, #3a3a3a 50%); border: 1px solid #333; }
.dropbtn { display: flex; align-items: center; justify-content: center; width: 22px; height: 20px; background: #4c4c4c; border: 1px solid #333; border-radius: 3px; }
.dropbtn::after { content: ""; border: 3px solid transparent; border-top-color: #888; border-bottom: 0; }
.llist { flex: 1; padding-right: 15px; }
.lsel { height: 24px; background: #465368; }
.litem { height: 25px; background: #464646; border-bottom: 1px solid #333; }
.lactions { flex: none; display: flex; height: 21px; padding-left: 30px; border-top: 1px solid #606060; background: #4b4b4b; color: #8b8b8b; }
.lactions button { width: 27px; }

.taskbar { flex: none; height: 7px; display: flex; overflow: hidden; background: linear-gradient(90deg, #12507e, #2f96cf 13%, #1e86c4 50%, #175cae 75%, #17477d); border-top: 1px solid #1a2c3c; }
.orb { width: 28px; height: 28px; margin: 1px 18px 0 14px; border-radius: 50%; background: radial-gradient(#4f86a6, #cfe0ea); }
.task { width: 58px; height: 30px; margin-right: 3px; padding: 3px 18px; border-radius: 2px; background: #9fc6dc; box-shadow: inset 0 0 0 1px #e4f5fc; }
.task.lit { background: #d5eefa; }
.task b { display: block; width: 24px; height: 24px; background: #17346a; border: 1px solid #7ab6ff; }
.task .round { border-radius: 50%; background: #dd4536; border: 0; }
.taskbar time { margin: 2px 24px 0 auto; color: #fff; }
.peek { width: 13px; height: 30px; border: 1px solid #9eb3c6; background: #50708e; }

.navigator { position: absolute; right: 281px; top: 142px; width: 213px; background: #535353; border: 1px solid #2a2a2a; border-top-width: 3px; }
.nthumb { height: 98px; margin: 8px 5px 8px; padding: 31px 0 0 30px; border: 2px solid #fa5252; outline: 1px solid #777; background: #fff; color: #b90f4b; font: bold 13px/20px "Noto Sans CJK SC", sans-serif; }
.nbar { display: flex; align-items: center; height: 19px; border-top: 1px solid #383838; border-bottom: 1px solid #303030; font: 11px/16px "Noto Sans", sans-serif; }
.nbar span { width: 58px; height: 16px; background: #3e3e3e; color: #777; margin-right: 6px; }
.nbar input[type=range] { width: 88px; margin: 0 2px 0 7px; background: linear-gradient(#333, #555) 6px 5px / calc(100% - 12px) 5px no-repeat; }
.nbar input[type=range]::-webkit-slider-thumb { background-image: var(--darkthumb); }
.navigator > .hgrip { margin: 2px auto 2px; }

.dialog { position: absolute; right: 23px; top: 325px; width: 627px; padding: 0 7px 7px; border-radius: 7px 7px 5px 5px; border: 1px solid #151b22; color: #000;
  box-shadow: inset 0 0 0 1px rgba(230,240,248,.75), 0 2px 12px 2px rgba(0,0,0,.75);
  background: linear-gradient(90deg, #b8d8fa, #c6e0fb 30%, #b4d6fa 264px, #202b34 270px, #26313a 330px, #4c5862 480px, #828d96 560px, #9ca7af) 0 0 / 100% 30px no-repeat,
    linear-gradient(#b8d8fa 50%, #9fcdfb 275px, #232c34 285px, #3a4858) 0 30px / 50% 100% no-repeat,
    linear-gradient(#7e8a94, #aab4bc 115px, #46586c 118px, #3c4b5d) 100% 30px / 50% 100% no-repeat; }
.dtitle { display: flex; justify-content: space-between; height: 29px; }
.dtitle h1 { margin: 5px 0 0; font: 12px/18px "Noto Sans CJK SC", sans-serif; text-shadow: 0 0 6px #fff; }
.dtitle button { width: 48px; height: 19px; margin-right: -2px; border: 1px solid #4a1e1e; border-top: 0; border-radius: 0 0 4px 4px; background: linear-gradient(#e0a59c, #cf6e5f 48%, #b32b18 50%, #cf6150); box-shadow: inset 0 0 0 1px rgba(255,255,255,.45); }
.client { display: flex; height: 474px; padding: 15px 10px 10px 11px; background: #ededed; outline: 1px solid #333c46; font-family: "Noto Sans", "Noto Sans CJK SC", sans-serif; }
.styles { width: 92px; flex: none; border: 1px solid #9c9c9c; }
.shead { height: 22px; padding: 0 5px; line-height: 15px; border-bottom: 1px solid #9c9c9c; white-space: nowrap; }
.shead.second { height: 23px; margin-top: 1px; border-top: 1px solid #9c9c9c; }
.effect { height: 22px; padding-left: 5px; border-bottom: 1px solid #fff; }
.effect.sub { padding-left: 19px; }
.effect.sel { background: #3296ff; }
.effect label { display: flex; align-items: center; gap: 5px; height: 21px; white-space: nowrap; }
.client input[type=checkbox] { appearance: none; width: 11px; height: 11px; border: 1px solid #8a8f94; background: linear-gradient(135deg, #cfd3d8, #fff); box-shadow: inset 0 0 0 1px #f4f4f4; }
.client input[type=checkbox]:checked::after { content: ""; display: block; width: 4px; height: 7px; margin: 0 0 0 3px; border: solid #3a4f96; border-width: 0 2px 2px 0; transform: rotate(40deg); }
fieldset { margin: 0; padding: 0; min-width: 0; border: 1px solid #9c9c9c; }
legend { padding: 0 7px; margin-left: 15px; line-height: 16px; }
.outer { flex: none; width: 355px; height: 455px; margin: -6px 16px 0 16px; }
.group { width: 335px; height: 125px; margin: 3px 0 5px 9px; }
.group legend { padding: 0 7px 0 5px; margin-left: 15px; }
.group.last { height: 109px; margin-bottom: 6px; }
.row { display: grid; grid-template-columns: 89px 111px 54px auto; height: 22px; align-items: center; justify-content: start; column-gap: 2px; padding-left: 1px; white-space: nowrap; }
.row > label:first-child, .cap { text-align: right; }
.row input[type=text] { height: 18px; padding: 0 4px; border: 1px solid #dde2ea; border-top-color: #aaaeb5; background: #fff; font-size: 11px; }
.row.tall { height: 25px; margin-top: 7px; }
.row.medium { height: 27px; margin-top: 6px; }
.pick { position: relative; margin-left: 3px; width: 57px; }
.pick.wide { width: 132px; }
.pick select { appearance: none; display: block; width: 100%; height: 21px; padding: 0 5px; border: 1px solid #dde2ea; border-top-color: #aaaeb5; background: #fff; color: #000; }
.pick::after { content: ""; position: absolute; right: 4px; top: 9px; border: 4px solid transparent; border-top: 4px solid #000; border-bottom: 0; }
.fills { display: flex; align-items: center; height: 27px; padding-left: 46px; }
input[type=radio] { appearance: none; width: 12px; height: 12px; border: 1px solid #8a8a8a; border-radius: 50%; background: radial-gradient(#e8e8e8 30%, #ccc); }
input[type=radio]:checked { background: radial-gradient(circle, #2a9fd0 0 1px, #0d4570 3px, #eee 4px); }
.chip { width: 17px; height: 17px; margin: 0 13px 0 6px; background: #f2efb5; border: 1px solid #aaa; }
.grad { width: 123px; height: 18px; margin-left: 5px; border: 1px solid #000; justify-content: flex-start; }
.grad i { width: 105px; height: 16px; margin-right: 4px; border-right: 1px solid #000; background: linear-gradient(90deg, #f2efb5, rgba(255,255,225,.1)), repeating-conic-gradient(#fff 0 25%, #ccc 0 50%) 0 0 / 8px 8px; }
.row.radios { height: 26px; display: flex; }
.radios .cap { width: 89px; margin-right: 1px; }
.radios label { display: flex; align-items: center; gap: 3px; margin-right: 21px; }
.row.contour { display: flex; height: 34px; margin-top: 7px; }
.contour .cap { width: 89px; margin-right: 3px; }
.contour button { width: 42px; height: 31px; border: 1px solid #000; justify-content: space-between; padding-right: 3px; margin-right: 12px; }
.contour > button > svg:first-child { border-right: 1px solid #000; }
.contour label { display: flex; align-items: center; gap: 3px; }
.contour input[type=checkbox], .actions input[type=checkbox] { width: 13px; height: 13px; }
.btn { padding-top: 2px; border: 1px solid #707070; border-radius: 3px; background: linear-gradient(#f3f3f3, #ebebeb 50%, #d8d8d8 50%, #cfcfcf); box-shadow: inset 0 0 0 1px #fafafa; white-space: nowrap; }
.defaults { display: flex; gap: 10px; margin-left: 73px; }
.defaults .btn { width: 98px; height: 20px; }
.actions { width: 110px; display: flex; flex-direction: column; align-items: center; font-family: "DejaVu Sans", "Noto Sans CJK SC", sans-serif; }
.actions .btn { width: 110px; height: 18px; margin-bottom: 10px; flex: none; }
.actions .primary { border-color: #3c7fb1; box-shadow: inset 0 0 0 1px #48d0f8; background: linear-gradient(#e6f0f6, #dbe6ec 50%, #c2d2da 50%, #cad8df); }
.actions label { display: flex; align-items: center; gap: 2px; width: 68px; height: 16px; margin-bottom: 4px; }
.sample { display: flex; align-items: center; justify-content: center; width: 66px; height: 65px; background: #d8d8d8; border: 1px solid #aaa; border-bottom-color: #fff; }
</style>
